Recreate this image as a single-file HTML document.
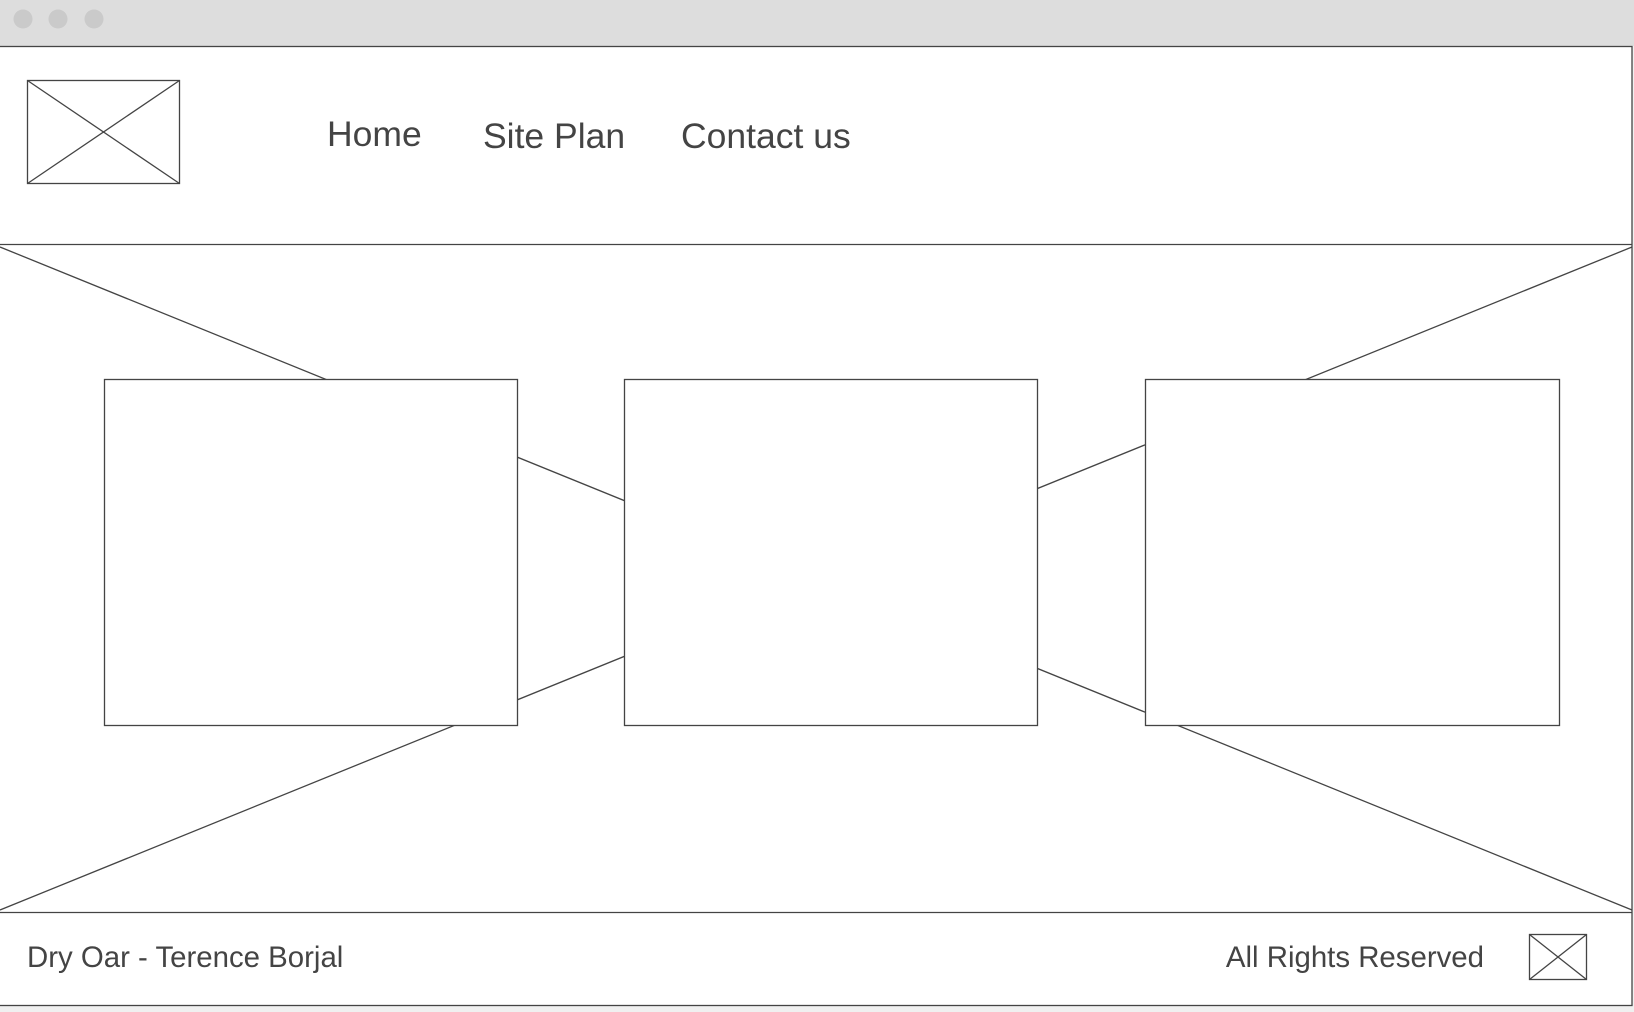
<!DOCTYPE html>
<html><head><style>
html,body{margin:0;padding:0;background:#f0f0f0;width:1634px;height:1012px;overflow:hidden}
svg{display:block}
text{font-family:"Liberation Sans",sans-serif;fill:#444}
</style></head><body>
<svg width="1634" height="1012" viewBox="0 0 1634 1012">
<rect x="0" y="0" width="1634" height="1012" fill="#f0f0f0"/>
<rect x="0" y="0" width="1634" height="46" fill="#dddddd"/>
<circle cx="23" cy="19" r="9.5" fill="#cacaca"/>
<circle cx="58" cy="19" r="9.5" fill="#cacaca"/>
<circle cx="94" cy="19" r="9.5" fill="#cacaca"/>
<rect x="-1" y="46.5" width="1633" height="959" fill="#fff" stroke="#444" stroke-width="1.3"/>
<g stroke="#444" stroke-width="1.3" fill="none">
<rect x="27.5" y="80.5" width="152" height="103"/>
<line x1="27.5" y1="80.5" x2="179.5" y2="183.5"/>
<line x1="179.5" y1="80.5" x2="27.5" y2="183.5"/>
<line x1="0" y1="244.5" x2="1632" y2="244.5"/>
<line x1="0" y1="247" x2="1632" y2="910"/>
<line x1="1632" y1="247" x2="0" y2="910"/>
<line x1="0" y1="912.5" x2="1632" y2="912.5"/>
</g>
<g stroke="#444" stroke-width="1.3" fill="#fff">
<rect x="104.5" y="379.5" width="413" height="346"/>
<rect x="624.5" y="379.5" width="413" height="346"/>
<rect x="1145.5" y="379.5" width="414" height="346"/>
</g>
<g stroke="#444" stroke-width="1.3" fill="none">
<rect x="1529.5" y="934.5" width="57" height="45"/>
<line x1="1529.5" y1="934.5" x2="1586.5" y2="979.5"/>
<line x1="1586.5" y1="934.5" x2="1529.5" y2="979.5"/>
</g>
<text x="327" y="146" font-size="35.5">Home</text>
<text x="483" y="148" font-size="35.5">Site Plan</text>
<text x="681" y="148" font-size="35.5">Contact us</text>
<text x="27" y="967" font-size="29.4">Dry Oar - Terence Borjal</text>
<text x="1484" y="967" font-size="29.4" text-anchor="end">All Rights Reserved</text>
</svg>
</body></html>
